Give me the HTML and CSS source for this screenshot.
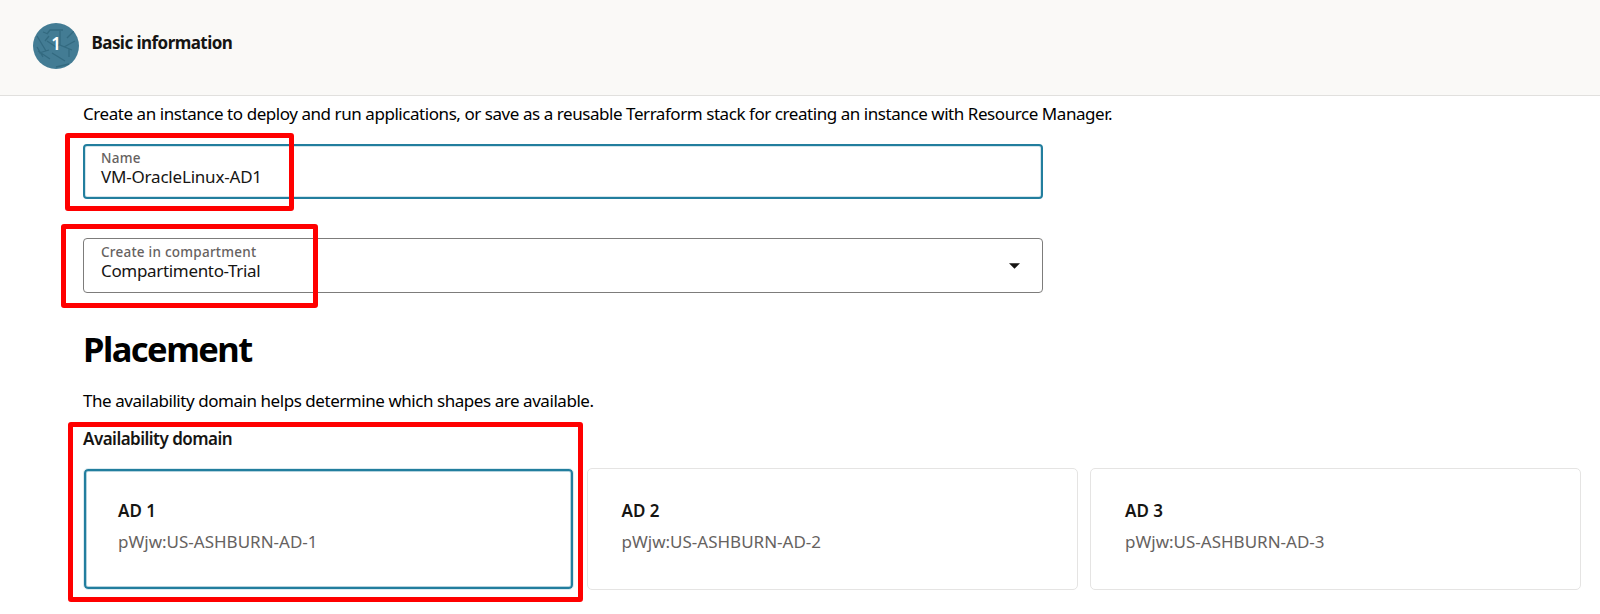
FILE: index.html
```html
<!DOCTYPE html>
<html lang="en">
<head>
<meta charset="utf-8">
<title>Create instance</title>
<link rel="stylesheet" href="styles.css">
</head>
<body>
<header class="step-header">
  <div class="step-badge">
    <svg class="badge-texture" viewBox="0 0 46 46" aria-hidden="true">
      <path d="M14 11l3-4h13M10 9l5 2M27 8v14l12 5M16 13l-4 5M14 18l9 6 4-3M34 15l8-8M4 13l9 15M5 28l12 8M6 30l10-3M4 24l6 10M19 30l13 8M31 24l11-6M36 26v8M23 44l13-3"/>
    </svg>
    <span class="step-number">1</span>
  </div>
  <h2 class="step-title">Basic information</h2>
</header>
<main class="content">
  <p class="intro">Create an instance to deploy and run applications, or save as a reusable Terraform stack for creating an instance with Resource Manager.</p>
  <div class="field field-name">
    <span class="field-label label-name">Name</span>
    <span class="field-value value-name">VM-OracleLinux-AD1</span>
    <span class="mark mark-name"></span>
  </div>
  <div class="field field-compartment">
    <span class="field-label label-compartment">Create in compartment</span>
    <span class="field-value value-compartment">Compartimento-Trial</span>
    <svg class="caret" viewBox="0 0 11 6" aria-hidden="true"><path d="M0 0.3h11L5.5 5.8z"/></svg>
    <span class="mark mark-compartment"></span>
  </div>
  <h1 class="heading">Placement</h1>
  <p class="hint">The availability domain helps determine which shapes are available.</p>
  <section class="domains">
    <h3 class="domains-label">Availability domain</h3>
    <div class="cards">
      <div class="card selected"><b class="card-title">AD 1</b><span class="card-sub">pWjw:US-ASHBURN-AD-1</span></div>
      <div class="card"><b class="card-title">AD 2</b><span class="card-sub">pWjw:US-ASHBURN-AD-2</span></div>
      <div class="card"><b class="card-title">AD 3</b><span class="card-sub">pWjw:US-ASHBURN-AD-3</span></div>
    </div>
    <span class="mark mark-domain"></span>
  </section>
</main>
</body>
</html>
```
FILE: styles.css
```css
* { box-sizing: border-box; }
body {
  margin: 0;
  min-height: 614px;
  background: #fff;
  color: #000;
  font: 17px/24px "Noto Sans", sans-serif;
  white-space: nowrap;
}
h1, h2, h3, p { margin: 0; }

.step-header {
  display: flex;
  align-items: flex-start;
  gap: 12.5px;
  height: 96px;
  padding: 23px 0 0 33px;
  background: #faf9f7;
  border-bottom: 1px solid #e1e0de;
}
.step-badge {
  position: relative;
  width: 46px;
  height: 46px;
  border-radius: 50%;
  overflow: hidden;
  background: #437c94;
  text-align: center;
}
.badge-texture {
  position: absolute;
  inset: 0;
  fill: none;
  stroke: #336a80;
  stroke-width: 1.3;
}
.step-number {
  position: relative;
  display: block;
  padding-top: 9px;
  color: #fff;
  font-weight: 600;
}
.step-title {
  padding-top: 8px;
  color: #161513;
  font-size: 17px;
  font-weight: 700;
  letter-spacing: -0.55px;
}

.content { padding: 6px 19px 24px 83px; }
.intro { letter-spacing: -0.443px; }

.field {
  position: relative;
  display: flex;
  flex-direction: column;
  width: 960px;
  height: 55px;
  border: 1px solid #7d7c7b;
  border-radius: 4px;
}
.field-name {
  margin-top: 18px;
  padding: 1px 0 0 16px;
  border: 2px solid #227e9e;
  box-shadow: inset 0 0 0 1px #d3e5ec;
}
.field-compartment { margin-top: 39px; padding: 2px 0 0 17px; }
.field-label {
  height: 18px;
  color: #66625f;
  font-size: 13.5px;
  font-weight: 500;
  letter-spacing: 0.24px;
  line-height: 22px;
}
.field-value { color: #161513; line-height: 24px; }
.value-name { letter-spacing: -0.2px; }
.value-compartment { letter-spacing: -0.33px; }
.caret {
  position: absolute;
  right: 22px;
  top: 24px;
  width: 11px;
  height: 6px;
  fill: #161513;
}

.heading {
  margin-top: 32px;
  font-size: 34.5px;
  font-weight: 700;
  letter-spacing: -1.52px;
  line-height: 48px;
}
.hint { margin-top: 16px; letter-spacing: -0.45px; }

.domains { position: relative; margin-top: 14px; }
.domains-label {
  color: #161513;
  font-size: 17px;
  font-weight: 600;
  letter-spacing: -0.52px;
}
.cards {
  display: grid;
  grid-template-columns: repeat(3, 491px);
  justify-content: space-between;
  margin-top: 17px;
}
.card {
  display: flex;
  flex-direction: column;
  gap: 7px;
  height: 122px;
  padding: 30px 0 0 34px;
  border: 1px solid #e5e4e3;
  border-radius: 5px;
}
.selected {
  border-color: #dcebf0;
  box-shadow: inset 0 0 0 2px #227e9e, inset 0 0 0 3px #b5d3de;
}
.card-title { color: #161513; font-weight: 600; }
.card-sub { color: #66625f; }

/* Highlight frames laid over the form */
.mark {
  position: absolute;
  border: 5px solid #f00;
  border-radius: 3px;
}
.mark-name { left: -20px; top: -13px; width: 229px; height: 78px; }
.mark-compartment { left: -23px; top: -15px; width: 257px; height: 84px; }
.mark-domain { left: -15px; top: -5px; width: 515px; height: 180px; }
```
